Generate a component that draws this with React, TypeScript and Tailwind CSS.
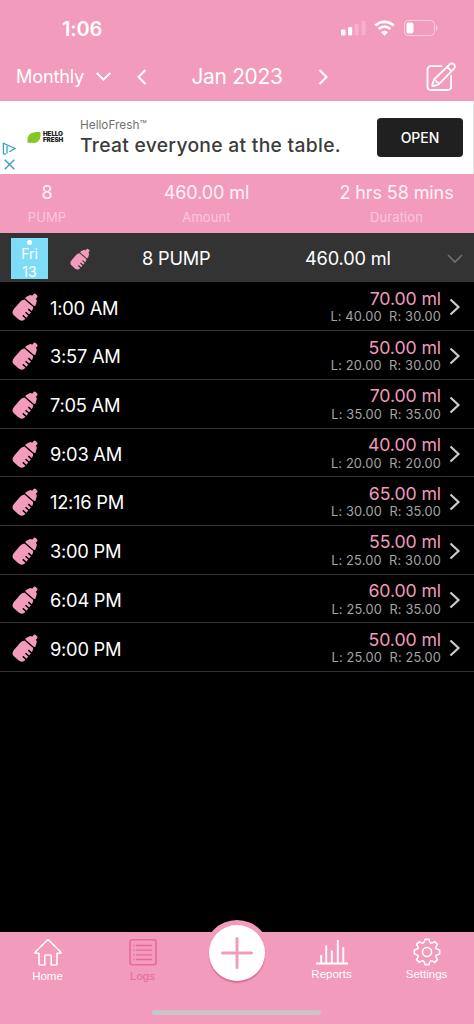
import type { ReactNode } from "react";

type Entry = {
  time: string;
  amount: string;
  left: string;
  right: string;
};

const entries: Entry[] = [
  { time: "1:00 AM", amount: "70.00 ml", left: "40.00", right: "30.00" },
  { time: "3:57 AM", amount: "50.00 ml", left: "20.00", right: "30.00" },
  { time: "7:05 AM", amount: "70.00 ml", left: "35.00", right: "35.00" },
  { time: "9:03 AM", amount: "40.00 ml", left: "20.00", right: "20.00" },
  { time: "12:16 PM", amount: "65.00 ml", left: "30.00", right: "35.00" },
  { time: "3:00 PM", amount: "55.00 ml", left: "25.00", right: "30.00" },
  { time: "6:04 PM", amount: "60.00 ml", left: "25.00", right: "35.00" },
  { time: "9:00 PM", amount: "50.00 ml", left: "25.00", right: "25.00" },
];

export default function App() {
  return (
    <div className="flex h-[1024px] w-[474px] flex-col overflow-hidden bg-black font-['Inter','Liberation_Sans',sans-serif] text-white">
      <StatusBar />
      <MonthBar />
      <AdBanner />
      <Summary />
      <DayHeader />
      <ul className="grow pt-[0.6px]">
        {entries.map((entry) => (
          <EntryRow key={entry.time} {...entry} />
        ))}
      </ul>
      <TabBar />
    </div>
  );
}

function StatusBar() {
  return (
    <div className="flex h-[52px] shrink-0 items-center justify-between bg-[#f29bbc] pt-1 pr-9 pl-[62px]">
      <span className="pt-[2px] text-[20px] font-semibold tracking-[-0.2px]">1:06</span>
      <div className="flex items-center gap-2">
        <svg width="26" height="16" viewBox="0 0 26 16" fill="#fff">
          <rect x="1" y="9.5" width="4.5" height="6" rx="1.3" />
          <rect x="8" y="7" width="4.2" height="8.5" rx="1.3" />
          <rect x="14.5" y="4" width="4.2" height="11.5" rx="1.3" opacity=".22" />
          <rect x="21.5" y="0.5" width="4.2" height="15" rx="1.3" opacity=".22" />
        </svg>
        <svg width="21" height="16" viewBox="0 0 21 16">
          <path d="M1.3 5.6a13 13 0 0 1 18.4 0M4.7 9a8.2 8.2 0 0 1 11.6 0" fill="none" stroke="#fff" strokeWidth="2.8" />
          <path d="M10.5 15.8 7 12.2a5 5 0 0 1 7 0z" fill="#fff" />
        </svg>
        <svg width="35" height="16" viewBox="0 0 35 16">
          <rect x="1.5" y="0.5" width="30" height="15" rx="4" fill="none" stroke="#fff" strokeOpacity=".5" />
          <rect x="3.5" y="2.5" width="7" height="11" rx="2.2" fill="#fff" />
          <path d="M32.8 5.3c2.4.9 2.4 4.6 0 5.5z" fill="#fff" opacity=".5" />
        </svg>
      </div>
    </div>
  );
}

function MonthBar() {
  return (
    <div className="flex h-[49px] shrink-0 items-center bg-[#f29bbc] pl-4">
      <span className="w-[80px] pt-px text-[18.2px] tracking-[-0.2px] whitespace-nowrap">Monthly</span>
      <svg width="15" height="10" viewBox="0 0 15 10" fill="none" stroke="#fff" strokeWidth="2">
        <path d="m.8 1 6.7 6.7L14.2 1" />
      </svg>
      <svg className="ml-[26px]" width="10" height="16" viewBox="0 0 10 16" fill="none" stroke="#fff" strokeWidth="2">
        <path d="M8.5 1 1.5 8l7 7" />
      </svg>
      <span className="w-[171px] pl-[9px] text-center text-[20.9px] tracking-[-0.3px]">Jan 2023</span>
      <svg width="10" height="16" viewBox="0 0 10 16" fill="none" stroke="#fff" strokeWidth="2">
        <path d="m1.5 1 7 7-7 7" />
      </svg>
      <svg className="ml-[99px] overflow-visible" width="30" height="30" viewBox="0 0 30 30" fill="none" stroke="#fff" strokeWidth="1.8" strokeLinejoin="round" strokeLinecap="round">
        <path d="M14.5 4.2h-11A3 3 0 0 0 .5 7.2V25a3 3 0 0 0 3 3h17.6a3 3 0 0 0 3-3V14" />
        <path d="m7 17.5-1.7 5.6q-.2 1.2 1 1l5.4-1.8L27 6.6a2.9 2.9 0 0 0-4.3-4.3zM20.2 4.9l4.2 4.3" />
        <path d="M7.2 17.6q2.4.4 2.2 2.4 2.2-.2 2.3 2.2" strokeWidth="1.3" />
      </svg>
    </div>
  );
}

function AdBanner() {
  return (
    <div className="flex h-[73px] shrink-0 border-r border-[#e4e4e4] bg-white">
      <div className="flex w-[27px] flex-col gap-1 pt-[41px] pl-[2px]">
        <svg width="14" height="13" viewBox="0 0 14 13" fill="none" stroke="#3c9fc5" strokeWidth="1.3">
          <path d="M4 11.8H1.4V1.2L13 6.5 7.2 9.8" />
          <path d="M5 11.5V4" />
        </svg>
        <svg className="ml-[2px]" width="11" height="11" viewBox="0 0 11 11" stroke="#3c9fc5" strokeWidth="1.4">
          <path d="m.7.7 9.6 9.6m0-9.6L.7 10.3" />
        </svg>
      </div>
      <div className="flex w-[53px] items-center gap-[2px]">
        <svg width="14" height="13" viewBox="0 0 14 13">
          <path d="M.7 12C-.7 5 3 1.6 8 1.2c2-.2 4 .1 5.2-.7 1.4 7.2-1.4 11.3-6.4 11.5-2 .1-4.1-.5-6.1 0z" fill="#84c926" />
          <path d="M2.4 10.5 10.5 4" stroke="#65b21b" strokeWidth=".6" />
        </svg>
        <div className="flex flex-col text-[6.3px] leading-[5.5px] font-black tracking-[-0.1px] text-[#222]">
          <span>HELLO</span>
          <span>FRESH</span>
        </div>
      </div>
      <div className="w-[297px] pt-[14px] whitespace-nowrap">
        <div className="text-[11.8px] leading-5 text-[#707070]">HelloFresh™</div>
        <div className="text-[19.3px] leading-[20px] font-medium tracking-[0.29px] text-[#3c3c3c]">
          Treat everyone at the table.
        </div>
      </div>
      <button className="mt-[17px] h-[39px] w-[86px] rounded-[4px] bg-[#202020] text-[14px] font-medium text-white">
        OPEN
      </button>
    </div>
  );
}

function Summary() {
  return (
    <div className="flex h-[59px] shrink-0 bg-[#f29bbc]">
      <SummaryItem className="w-[94px]" value="8" label="PUMP" />
      <SummaryItem className="w-[225px]" value="460.00 ml" label="Amount" />
      <SummaryItem className="w-[155px]" value="2 hrs 58 mins" label="Duration" />
    </div>
  );
}

function SummaryItem({ className, value, label }: { className: string; value: string; label: string }) {
  return (
    <div className={`${className} pt-[7px] text-center whitespace-nowrap`}>
      <div className="text-[18px] leading-6 tracking-[-0.1px] text-[#fff3f8]">{value}</div>
      <div className="pt-[3px] text-[13px] leading-[18px] tracking-[0.1px] text-[#f9c8dc]">{label}</div>
    </div>
  );
}

function DayHeader() {
  return (
    <div className="flex h-[49px] shrink-0 items-center bg-[#333] pr-[11px] pl-[11px] text-[18.2px]">
      <div className="mt-[2px] flex h-[41px] w-[37px] flex-col items-center bg-[#7fdcf7] pt-[2px] text-[14px] leading-[18px]">
        <span className="h-[5px] w-[5px] shrink-0 rounded-full bg-white" />
        <span>Fri</span>
        <span>13</span>
      </div>
      <BottleIcon className="mt-[2px] ml-[22px] h-[20px] w-[20px]" gap="#333" />
      <span className="mt-[3px] ml-[52px] w-[163px] tracking-[-0.2px]">8 PUMP</span>
      <span className="mt-[3px] grow tracking-[-0.15px]">460.00 ml</span>
      <svg className="mt-[3px]" width="16" height="10" viewBox="0 0 16 10" fill="none" stroke="#707070" strokeWidth="1.7">
        <path d="m1 1 7 7 7-7" />
      </svg>
    </div>
  );
}

function EntryRow({ time, amount, left, right }: Entry) {
  return (
    <li className="flex h-[48.7px] items-center border-b border-[#333] pr-[13px] pl-3">
      <BottleIcon className="mt-[2px] h-[26px] w-[26px]" gap="#000" />
      <span className="mt-1 ml-[12px] grow text-[18.3px] tracking-[-0.25px]">{time}</span>
      <div className="pt-[1.5px] text-right">
        <div className="text-[17.7px] leading-[19.5px] tracking-[-0.1px] text-[#f29bbc]">{amount}</div>
        <div className="text-[12.8px] leading-[17px] tracking-[0.15px] whitespace-pre text-[#a5a5a5]">
          {`L: ${left}  R: ${right}`}
        </div>
      </div>
      <svg className="mt-[2px] ml-[8px]" width="12" height="18" viewBox="0 0 12 18" fill="none" stroke="#ccc" strokeWidth="2.2">
        <path d="m1.5 1.5 8 7.5-8 7.5" />
      </svg>
    </li>
  );
}

function BottleIcon({ className, gap }: { className: string; gap: string }) {
  return (
    <svg className={`${className} shrink-0 overflow-visible`} viewBox="0 0 26 26">
      <g transform="translate(.6 0) rotate(41 13 13)" fill="#f29bbc">
        <rect x="10.6" y="-3.4" width="4.8" height="5" rx="1.6" />
        <path d="M10.2.2h5.6q1.4 0 1.9 1.3l1.6 3.6q.4 1.7-1.3 1.7H8q-1.7 0-1.3-1.7l1.6-3.6Q8.800.2 10.2.2z" />
        <path d="M7.2 8.1h11.6q1.8 2 1.8 4.4v9.3q0 5.2-5 5.2h-5.200q-5 0-5-5.200v-9.300q0-2.400 1.800-4.400z" />
        <path d="M16.400 12.800h5M16.400 17h5M16.400 21.200h5" stroke={gap} strokeWidth="1.5" />
      </g>
    </svg>
  );
}

function TabBar() {
  return (
    <nav className="relative h-[92px] shrink-0 bg-[#f29bbc]">
      <div className="flex justify-between pt-[6px]">
        <Tab label="Home">
          <path d="M14 1.5 1.2 14q-.5 1 .7 1.3H5V26q0 1 1 1h4.8V18q0-1 1-1h4.4q1 0 1 1v9H22q1 0 1-1V15.3h3.1q1.2-.3.7-1.3z" />
        </Tab>
        <Tab label="Logs" active>
          <rect x="1" y="1.7" width="26" height="25" rx="2.2" />
          <path d="M7 7.5h16M7 12.2h16M7 16.8h16M7 21.5h16" strokeWidth="1.3" />
          <path d="M4.3 7.5h1.2M4.3 12.2h1.2M4.3 16.8h1.2M4.3 21.5h1.2" />
        </Tab>
        <div className="w-[94px]" />
        <Tab label="Reports" raised>
          <path d="M-2 25.5h32M3.2 25V17M8.2 25V7.5M13.8 25V12.5M19.8 25V2M25.3 25V9" strokeWidth="1.9" />
        </Tab>
        <Tab label="Settings" raised>
          <circle cx="14" cy="14" r="4.5" />
          <path d="M12 1.4h4q.7 3.2 1.6 3.7 1.2.5 4-1.5l2.8 2.8q-2 2.8-1.5 4 .5.9 3.7 1.6v4q-3.2.7-3.7 1.6-.5 1.2 1.5 4l-2.800 2.800q-2.800-2-4-1.500-.9.5-1.600 3.700h-4q-.7-3.200-1.600-3.700-1.200-.5-4 1.500l-2.800-2.800q2-2.800 1.500-4-.5-.9-3.700-1.600v-4q3.200-.7 3.700-1.600.5-1.200-1.500-4l2.800-2.800q2.800 2 4 1.500.9-.5 1.600-3.700z" />
        </Tab>
      </div>
      <button aria-label="Add" className="absolute -top-[12px] left-[204px] flex h-[66px] w-[66px] items-center justify-center rounded-full bg-[#f29bbc]">
        <span className="flex h-[56px] w-[56px] items-center justify-center rounded-full bg-white shadow-[0_2px_1px_#dc6b98]">
          <svg width="32" height="32" viewBox="0 0 32 32" stroke="#f29bbc" strokeWidth="3" strokeLinecap="round">
            <path d="M16 1.5v29M1.5 16h29" />
          </svg>
        </span>
      </button>
      <div className="absolute bottom-[9px] left-[152px] h-[5px] w-[169px] rounded-full bg-[#c9c5c7]" />
    </nav>
  );
}

function Tab({ label, active = false, raised = false, children }: { label: string; active?: boolean; raised?: boolean; children: ReactNode }) {
  return (
    <div className={`flex w-[95px] flex-col items-center ${active ? "text-[#e66a99]" : "text-white"}`}>
      <svg className="overflow-visible" width="28" height="28" viewBox="0 0 28 28" fill="none" stroke="currentColor" strokeWidth="1.6" strokeLinejoin="round">
        {children}
      </svg>
      <span className={`font-['Liberation_Sans',Arial,sans-serif] text-[11.5px] leading-[14px] ${raised ? "mt-[1px]" : "mt-[3px]"}`}>
        {label}
      </span>
    </div>
  );
}
